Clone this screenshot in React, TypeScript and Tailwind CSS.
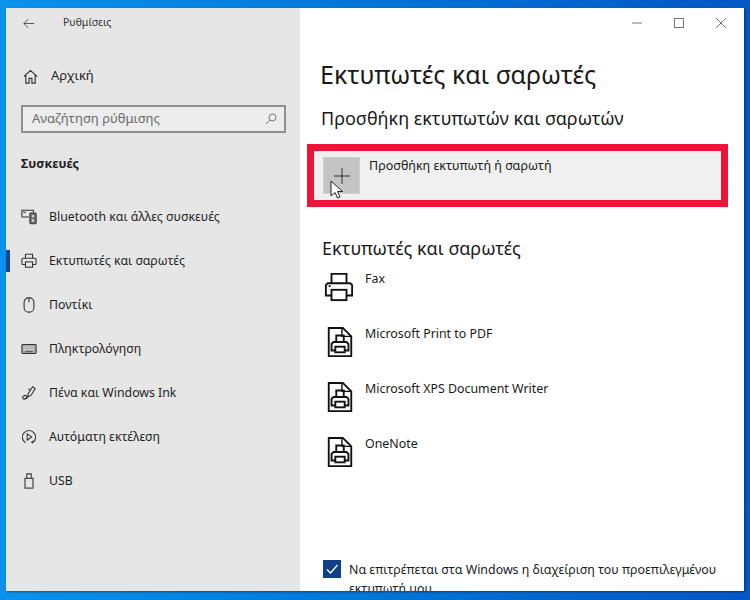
const font = { fontFamily: '"Noto Sans", "Open Sans", sans-serif' };

function IconBox({ children }: { children: React.ReactNode }) {
  return (
    <svg width="16" height="16" viewBox="0 0 18 18" fill="none" stroke="#333" strokeWidth="1.200" className="shrink-0">
      {children}
    </svg>
  );
}

const navItems: { label: string; active?: boolean; icon: React.ReactNode }[] = [
  {
    label: "Bluetooth και άλλες συσκευές",
    icon: (
      <>
        <path d="M9 9H1V1.500h13V4" />
        <rect x="2.500" y="3" width="3" height="1.500" fill="#555" stroke="none" />
        <rect x="10" y="4.500" width="7" height="12" rx="1" fill="#777" stroke="#333" />
        <circle cx="13.500" cy="8" r="1.300" fill="#e6e6e6" stroke="none" />
        <circle cx="13.500" cy="13" r="1.300" fill="#e6e6e6" stroke="none" />
      </>
    ),
  },
  {
    label: "Εκτυπωτές και σαρωτές",
    active: true,
    icon: (
      <>
        <path d="M5 6V1.500h8V6" />
        <path d="M5 13H2.500A1.500 1.500 0 0 1 1 11.500V7.500A1.500 1.500 0 0 1 2.500 6h13A1.500 1.500 0 0 1 17 7.500v4a1.500 1.500 0 0 1-1.500 1.500H13" />
        <rect x="5" y="10" width="8" height="6" />
      </>
    ),
  },
  {
    label: "Ποντίκι",
    icon: (
      <>
        <rect x="3.500" y="1" width="11" height="16" rx="5" />
        <path d="M9 1v5" />
      </>
    ),
  },
  {
    label: "Πληκτρολόγηση",
    icon: (
      <>
        <rect x="1" y="4" width="16" height="10" rx="1" fill="#aaa" />
        <path d="M3 7h12M3 9.500h12" stroke="#e6e6e6" strokeDasharray="1.500 1" />
        <path d="M5 12h8" stroke="#555" />
      </>
    ),
  },
  {
    label: "Πένα και Windows Ink",
    icon: (
      <>
        <path d="M8 10l5-8 3 2-5 8-3 1z" />
        <path d="M10 5l-2-.5M8.500 12.500C7 16 3 17 2 15s2-4 4-3-1 4-2 3" />
      </>
    ),
  },
  {
    label: "Αυτόματη εκτέλεση",
    icon: (
      <>
        <path d="M5 15.500A7.500 7.500 0 1 1 13 15.500" />
        <path d="M7 5.500l5 3.500-5 3.500z" />
        <path d="M11 14.500l2 1 .5-2.500" />
      </>
    ),
  },
  {
    label: "USB",
    icon: (
      <>
        <path d="M6.500 6V1h5v5" />
        <rect x="4.500" y="6" width="9" height="11" />
      </>
    ),
  },
];

function PrinterIcon() {
  return (
    <svg width="30" height="30" viewBox="0 0 32 32" fill="none" stroke="#111" strokeWidth="2" className="shrink-0 mt-[2px] -ml-[1px] mr-[1px]">
      <path d="M8 12V2h16v10" />
      <path d="M8 25H2V14l2-2h24l2 2v11h-6" />
      <rect x="8" y="19" width="16" height="11" fill="#fff" />
      <path d="M5 15h2" />
    </svg>
  );
}

function DocPrinterIcon() {
  return (
    <svg width="30" height="30" viewBox="0 0 32 32" fill="none" stroke="#111" strokeWidth="2" className="shrink-0 mt-[2px]">
      <path d="M4 1h15l9 9v21H4z" />
      <path d="M18 1v9h10" strokeWidth="1.500" />
      <path d="M12 16V9h8v7" />
      <path d="M11 25H7v-7l2-2h14l2 2v7h-4" />
      <rect x="11" y="21" width="10" height="6" fill="#fff" />
    </svg>
  );
}

const printers = [
  { name: "Fax", fax: true },
  { name: "Microsoft Print to PDF" },
  { name: "Microsoft XPS Document Writer" },
  { name: "OneNote" },
];

export default function App() {
  return (
    <div
      className="w-[750px] h-[600px] overflow-hidden bg-gradient-to-r from-[#0b92ea] to-[#0557c4] pl-[6px] pt-[8px]"
      style={font}
    >
      <div className="flex w-[738px] h-[583px] overflow-hidden bg-white shadow-[1px_1px_2px_rgba(0,0,0,0.4)]">
        {/* Sidebar */}
        <div className="w-[294px] shrink-0 bg-[#e6e6e6] text-[#1f1f1f] flex flex-col">
          <div className="flex items-center h-[30px] pl-[17px]">
            <svg width="12" height="11" viewBox="0 0 14 12" fill="none" stroke="#444" strokeWidth="1">
              <path d="M13 6H1M6 1L1 6l5 5" />
            </svg>
            <span className="ml-[28px] text-[10.500px] text-[#333]">Ρυθμίσεις</span>
          </div>
          <div className="flex items-center h-[30px] mt-[23px] pl-[17px]">
            <svg width="15" height="15" viewBox="0 0 16 16" fill="none" stroke="#333" strokeWidth="1.200">
              <path d="M1 8l7-6.500L15 8M3 6.500V15h3.500v-5h3v5H13V6.500" />
            </svg>
            <span className="ml-[13px] text-[13px]">Αρχική</span>
          </div>
          <div className="flex items-center justify-between ml-[15px] mt-[14px] w-[265px] h-[28px] border-2 border-[#8f8f8f] bg-[#ececec] pl-[9px] pr-[7px]">
            <span className="text-[13px] text-[#6b6b6b]">Αναζήτηση ρύθμισης</span>
            <svg width="12" height="12" viewBox="0 0 12 12" fill="none" stroke="#777" strokeWidth="1">
              <circle cx="7.500" cy="4.500" r="3.500" />
              <path d="M5 7l-4 4" />
            </svg>
          </div>
          <div className="ml-[15px] mt-[22px] text-[12.500px] font-bold leading-[18px]">Συσκευές</div>
          <div className="flex flex-col mt-[22px]">
            {navItems.map((item) => (
              <div key={item.label} className="relative flex items-center h-[44px] pl-[15px]">
                {item.active && <div className="absolute left-0 top-[11px] w-[4px] h-[22px] bg-[#0a4a94]" />}
                <IconBox>{item.icon}</IconBox>
                <span className="ml-[12px] text-[12.300px]">{item.label}</span>
              </div>
            ))}
          </div>
        </div>

        {/* Main pane */}
        <div className="relative flex-1 min-w-0 text-[#1a1a1a]">
          {/* Window buttons */}
          <div className="flex justify-end items-center h-[30px] pr-[18px] gap-[32px]">
            <svg width="10" height="10" viewBox="0 0 10 10" stroke="#777" strokeWidth="1"><path d="M0 5h10" /></svg>
            <svg width="10" height="10" viewBox="0 0 10 10" fill="none" stroke="#777" strokeWidth="1"><rect x="0.500" y="0.500" width="9" height="9" /></svg>
            <svg width="10" height="10" viewBox="0 0 10 10" stroke="#777" strokeWidth="1"><path d="M0 0l10 10M10 0L0 10" /></svg>
          </div>

          <h1 className="ml-[20px] mt-[18px] text-[25px] leading-[36px]">Εκτυπωτές και σαρωτές</h1>
          <h2 className="ml-[21px] mt-[14px] text-[18px] leading-[24px]">Προσθήκη εκτυπωτών και σαρωτών</h2>

          <div className="ml-[7px] mt-[14px] w-[421px] h-[63px] border-[7px] border-[#ee1439] bg-[#f0f0f0] flex items-start pl-[9px] pt-[6px]">
            <div className="relative w-[37px] h-[37px] bg-[#c4c4c4] border border-[#d0d0d0] flex items-center justify-center shrink-0">
              <svg width="16" height="16" viewBox="0 0 16 16" stroke="#333" strokeWidth="1"><path d="M8 0v16M0 8h16" /></svg>
              <svg width="14" height="20" viewBox="0 0 14 20" className="absolute left-[6px] top-[22px]">
                <path d="M1 1v15l4-3.500 2.500 5.500 2.500-1-2.500-5.500H12.500z" fill="#fff" stroke="#222" strokeWidth="1" />
              </svg>
            </div>
            <span className="ml-[9px] text-[12.500px] leading-[18px]">Προσθήκη εκτυπωτή ή σαρωτή</span>
          </div>

          <h2 className="ml-[22px] mt-[29px] text-[18px] leading-[24px]">Εκτυπωτές και σαρωτές</h2>

          <div className="flex flex-col ml-[25px] mt-[10px]">
            {printers.map((p) => (
              <div key={p.name} className="flex items-start h-[55px]">
                {p.fax ? <PrinterIcon /> : <DocPrinterIcon />}
                <span className="ml-[10px] text-[12.400px] leading-[18px]">{p.name}</span>
              </div>
            ))}
          </div>

          <div className="flex items-start ml-[23px] mt-[70px]">
            <div className="w-[18px] h-[18px] bg-[#0f3f86] flex items-center justify-center shrink-0">
              <svg width="14" height="14" viewBox="0 0 14 14" fill="none" stroke="#fff" strokeWidth="1.300">
                <path d="M2 7.500l3.500 3.500L12.500 3" />
              </svg>
            </div>
            <p className="ml-[8px] w-[385px] text-[12.400px] leading-[19px]">
              Να επιτρέπεται στα Windows η διαχείριση του προεπιλεγμένου εκτυπωτή μου
            </p>
          </div>
        </div>
      </div>
    </div>
  );
}
